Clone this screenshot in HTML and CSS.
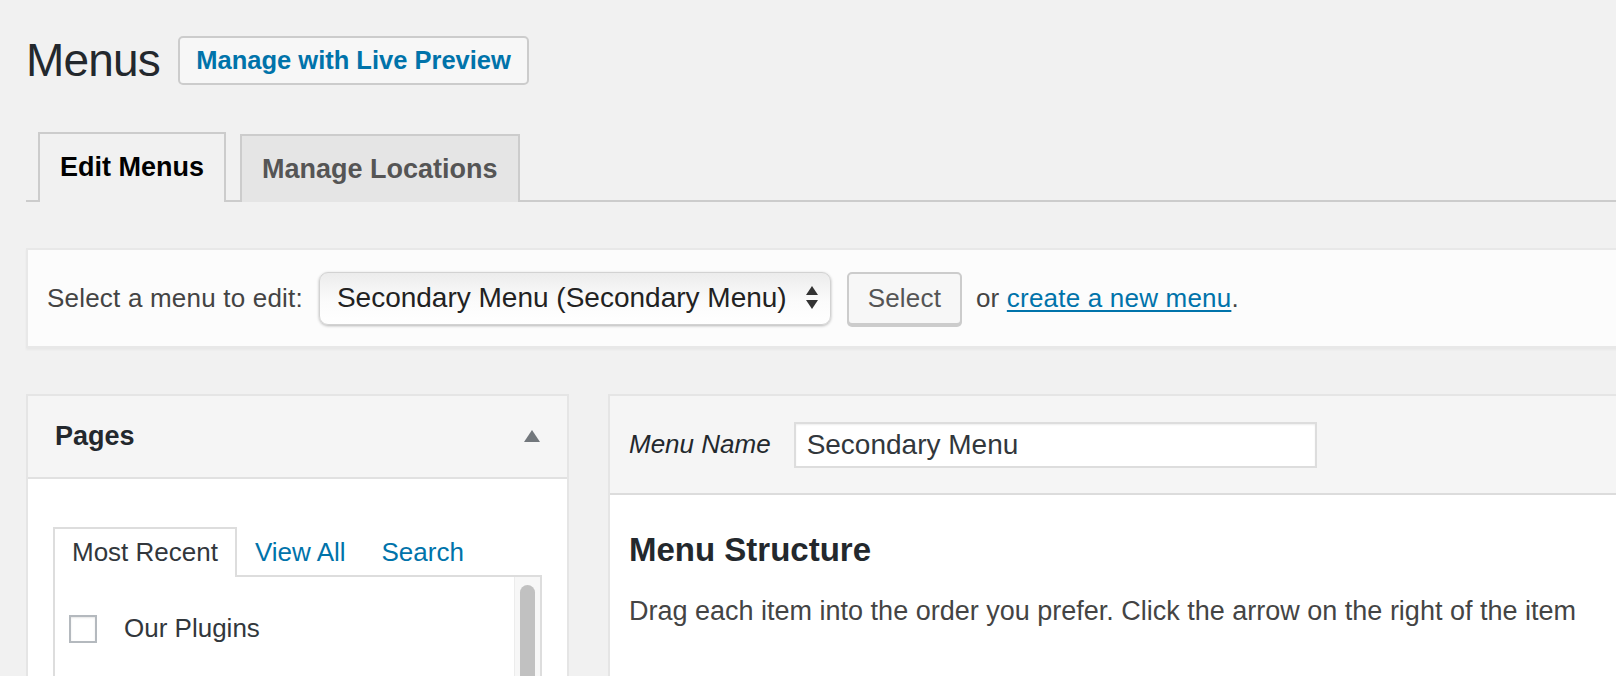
FILE: index.html
```html
<!DOCTYPE html>
<html>
<head>
<meta charset="utf-8">
<title>Menus</title>
<link rel="stylesheet" href="styles.css">
</head>
<body>
<div class="wrap">
  <div class="title-row">
    <h1 class="page-title">Menus</h1>
    <a class="title-btn">Manage with Live Preview</a>
  </div>

  <div class="nav-tabs">
    <div class="nav-tab active">Edit Menus</div>
    <div class="nav-tab">Manage Locations</div>
  </div>

  <div class="manage-menus">
    <span class="mm-label">Select a menu to edit:</span>
    <div class="fake-select">
      <span>Secondary Menu (Secondary Menu)</span>
      <svg class="sel-arrows" width="14" height="26" viewBox="0 0 14 26"><path d="M7 1 L13 10 L1 10 Z" fill="#333"/><path d="M1 15 L13 15 L7 24 Z" fill="#333"/></svg>
    </div>
    <div class="select-btn">Select</div>
    <span class="mm-or">or <a class="link">create a new menu</a>.</span>
  </div>

  <div class="columns">
    <div class="side-panel">
      <div class="side-head">
        <span class="side-title">Pages</span>
        <svg class="side-toggle" width="16" height="12" viewBox="0 0 16 12"><path d="M8 0 L16 12 L0 12 Z" fill="#72777c"/></svg>
      </div>
      <div class="side-body">
        <div class="inner-tabs">
          <div class="inner-tab active">Most Recent</div>
          <div class="inner-tab">View All</div>
          <div class="inner-tab">Search</div>
        </div>
        <div class="tab-panel">
          <div class="item-list">
            <label class="item"><span class="checkbox"></span><span>Our Plugins</span></label>
          </div>
          <div class="scrollbar"><div class="thumb"></div></div>
        </div>
      </div>
    </div>

    <div class="menu-panel">
      <div class="menu-head">
        <span class="menu-name-label">Menu Name</span>
        <div class="menu-name-input">Secondary Menu</div>
      </div>
      <div class="menu-body">
        <h3 class="menu-structure">Menu Structure</h3>
        <p class="menu-help">Drag each item into the order you prefer. Click the arrow on the right of the item</p>
      </div>
    </div>
  </div>
</div>
</body>
</html>
```

FILE: styles.css
```css
html, body {
  margin: 0;
  padding: 0;
}
body {
  background: #f1f1f1;
  font-family: "Liberation Sans", Arial, sans-serif;
  color: #444;
  overflow: hidden;
  width: 1616px;
  height: 676px;
}
.wrap {
  padding-left: 26px;
  width: 1650px;
  height: 676px;
  overflow: hidden;
}
.title-row {
  display: flex;
  align-items: center;
  padding-top: 36px;
  height: 49px;
}
.page-title {
  margin: 0;
  font-size: 46px;
  font-weight: 400;
  color: #23282d;
  line-height: 49px;
  letter-spacing: -0.8px;
}
.title-btn {
  margin-left: 18px;
  box-sizing: border-box;
  height: 49px;
  width: 351px;
  display: flex;
  align-items: center;
  justify-content: center;
  border: 2px solid #ccc;
  border-radius: 5px;
  background: #f7f7f7;
  color: #0073aa;
  font-weight: 700;
  font-size: 25.5px;
}
.nav-tabs {
  margin-top: 47px;
  display: flex;
  gap: 14px;
  padding-left: 12px;
  border-bottom: 2px solid #ccc;
  height: 68px;
  align-items: flex-end;
}
.nav-tab {
  box-sizing: border-box;
  height: 68px;
  line-height: 66px;
  padding: 0 20px;
  border: 2px solid #ccc;
  border-bottom: none;
  background: #e5e5e5;
  color: #555;
  font-weight: 700;
  font-size: 27px;
  margin-bottom: -2px;
  padding-bottom: 2px;
}
.nav-tab.active {
  background: #f1f1f1;
  color: #000;
  height: 70px;
}
.manage-menus {
  margin-top: 46px;
  box-sizing: border-box;
  height: 100px;
  background: #fcfcfc;
  border: 2px solid #e8e8e8;
  border-right: none;
  box-shadow: 0 2px 2px rgba(0,0,0,0.04);
  display: flex;
  align-items: center;
  padding-left: 19px;
  font-size: 26px;
  letter-spacing: 0.2px;
}
.mm-label {
  color: #444;
}
.fake-select {
  margin-left: 16px;
  box-sizing: border-box;
  width: 512px;
  height: 53px;
  border-radius: 9px;
  border: 1px solid #d2d2d2;
  background: linear-gradient(#ececec, #fbfbfb 55%, #ffffff);
  box-shadow: 0 1px 3px rgba(0,0,0,0.28);
  display: flex;
  align-items: center;
  justify-content: space-between;
  padding: 0 11px 0 17px;
  color: #222;
  font-size: 28px;
  letter-spacing: 0;
}
.sel-arrows {
  display: block;
}
.select-btn {
  margin-left: 16px;
  box-sizing: border-box;
  width: 115px;
  height: 53px;
  border: 2px solid #ccc;
  border-radius: 5px;
  background: #f7f7f7;
  box-shadow: 0 2px 0 #ccc;
  color: #555;
  font-size: 26px;
  display: flex;
  align-items: center;
  justify-content: center;
}
.mm-or {
  margin-left: 14px;
  color: #444;
}
.link {
  color: #0073aa;
  text-decoration: underline;
  text-underline-offset: 3px;
}
.columns {
  margin-top: 46px;
  display: flex;
  gap: 39px;
  align-items: flex-start;
}
.side-panel {
  width: 543px;
  box-sizing: border-box;
  border: 2px solid #e5e5e5;
  background: #fff;
  height: 300px;
}
.side-head {
  box-sizing: border-box;
  height: 83px;
  background: #f5f5f5;
  border-bottom: 2px solid #e1e1e1;
  display: flex;
  align-items: center;
  justify-content: space-between;
  padding: 0 27px 0 27px;
}
.side-title {
  font-size: 27px;
  font-weight: 700;
  color: #23282d;
}
.side-toggle {
  display: block;
  margin-top: -2px;
}
.side-body {
  padding: 48px 25px 0 25px;
}
.inner-tabs {
  display: flex;
  align-items: flex-end;
  font-size: 26px;
  height: 48px;
}
.inner-tab {
  color: #0073aa;
  padding: 0 18px;
  line-height: 46px;
  white-space: nowrap;
}
.inner-tab.active {
  box-sizing: border-box;
  height: 50px;
  padding: 0 17px;
  color: #32373c;
  background: #fff;
  border: 2px solid #ddd;
  border-bottom: none;
  margin-bottom: -2px;
  position: relative;
  z-index: 1;
}
.tab-panel {
  box-sizing: border-box;
  border: 2px solid #ddd;
  height: 140px;
  display: flex;
}
.item-list {
  flex: 1;
  padding: 36px 0 0 14px;
}
.item {
  display: flex;
  align-items: center;
  gap: 27px;
  font-size: 26px;
  color: #32373c;
}
.checkbox {
  box-sizing: border-box;
  width: 28px;
  height: 28px;
  border: 2px solid #b4b9be;
  background: #fff;
  box-shadow: inset 0 1px 2px rgba(0,0,0,0.1);
}
.scrollbar {
  width: 25px;
  background: #f7f7f7;
  border-left: 1px solid #ececec;
  padding: 8px 0 0 0;
  display: flex;
  justify-content: center;
}
.thumb {
  width: 15px;
  height: 120px;
  background: #c1c1c1;
  border-radius: 8px;
}
.menu-panel {
  flex: 1;
  box-sizing: border-box;
  border: 2px solid #e5e5e5;
  border-right: none;
  background: #fff;
  height: 300px;
  overflow: hidden;
}
.menu-head {
  box-sizing: border-box;
  height: 99px;
  background: #f5f5f5;
  border-bottom: 2px solid #dcdcdc;
  display: flex;
  align-items: center;
  padding-left: 19px;
}
.menu-name-label {
  font-style: italic;
  font-size: 26px;
  color: #23282d;
}
.menu-name-input {
  margin-left: 23px;
  box-sizing: border-box;
  width: 523px;
  height: 46px;
  background: #fff;
  border: 2px solid #ddd;
  box-shadow: inset 0 1px 2px rgba(0,0,0,0.07);
  display: flex;
  align-items: center;
  padding-left: 11px;
  font-size: 28px;
  color: #32373c;
}
.menu-body {
  padding: 0 0 0 19px;
}
.menu-structure {
  margin: 35px 0 0 0;
  font-size: 33px;
  font-weight: 700;
  color: #23282d;
  line-height: 40px;
}
.menu-help {
  margin: 23px 0 0 0;
  font-size: 27px;
  line-height: 36px;
  color: #444;
  white-space: nowrap;
}
```
